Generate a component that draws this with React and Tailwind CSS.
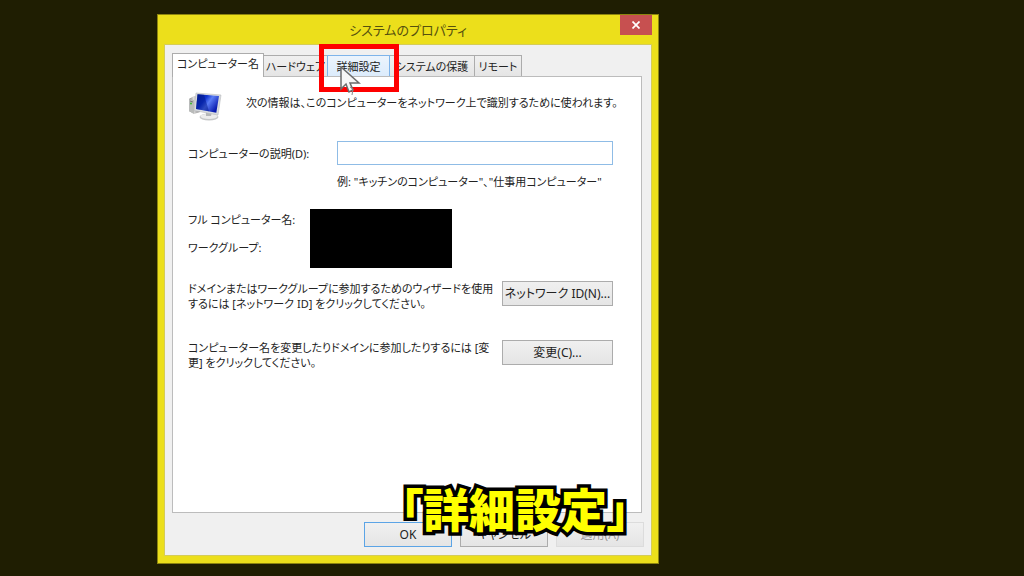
const tabs = [
  { label: 'コンピューター名', width: 'w-[92px]', state: 'selected' },
  { label: 'ハードウェア', width: 'w-[65px]', state: 'normal' },
  { label: '詳細設定', width: 'w-[63px]', state: 'hover' },
  { label: 'システムの保護', width: 'w-[86px]', state: 'normal' },
  { label: 'リモート', width: 'w-12', state: 'normal' },
];

const tabStyles = {
  selected: 'h-6 -mb-px border-b-0 border-[#acacac] bg-white pb-1 relative',
  normal: 'h-[21px] border-[#acacac] border-b-0 bg-linear-to-b from-[#f0f0f0] to-[#e5e5e5] -ml-px',
  hover: 'h-[21px] border-[#7eb4ea] border-b-0 bg-linear-to-b from-[#ecf4fc] to-[#dcecfc] -ml-px',
};

function Tab({ label, width, state, children }) {
  return (
    <div className={`flex ${state === 'hover' ? 'relative z-10' : ''}`}>
      <button
        type="button"
        role="tab"
        aria-selected={state === 'selected'}
        className={`flex items-center justify-center self-end border whitespace-nowrap ${width} ${tabStyles[state]}`}
      >
        {label}
      </button>
      {children}
    </div>
  );
}

function PushButton({ children, className = '', ...rest }) {
  return (
    <button
      type="button"
      className={`flex h-[25px] items-center justify-center border bg-linear-to-b from-[#f0f0f0] to-[#e5e5e5] whitespace-nowrap ${className}`}
      {...rest}
    >
      {children}
    </button>
  );
}

function ComputerIcon() {
  return (
    <svg viewBox="0 0 34 30" className="h-[30px] w-[34px] shrink-0" aria-hidden="true">
      <defs>
        <linearGradient id="screen" x1="0" y1="0" x2="1" y2="0.6">
          <stop offset="0" stopColor="#001b8c" />
          <stop offset="0.4" stopColor="#1034cf" />
          <stop offset="0.6" stopColor="#5b7df5" />
          <stop offset="1" stopColor="#0718ad" />
        </linearGradient>
        <linearGradient id="tower" x1="0" y1="0" x2="1" y2="0">
          <stop offset="0" stopColor="#777" />
          <stop offset="0.4" stopColor="#ddd" />
          <stop offset="1" stopColor="#888" />
        </linearGradient>
      </defs>
      <path d="M1 8 6 5 12 6V21L6 23 1 20Z" fill="url(#tower)" />
      <path d="M1 8 6 9V23L1 20Z" fill="#b9bbba" />
      <path d="M2 10 5 11" stroke="#777" />
      <circle cx="3" cy="12.500" r="1" fill="#39b82e" />
      <ellipse cx="21" cy="26" rx="9.500" ry="3.500" fill="#c5c7c8" />
      <ellipse cx="21" cy="25.300" rx="8.500" ry="2.600" fill="#ececec" />
      <path d="M18 20 24 21 23 25 18 25Z" fill="#b5b7b9" />
      <path d="M8 2 33 4 30 24 6 19.500Z" fill="#d9dcdf" stroke="#b8bbbd" strokeWidth=".6" />
      <path d="M9.500 3.300 31 5 28.300 21.700 8 18Z" fill="url(#screen)" />
      <path d="M9.500 3.300 16 3.800 21 20.300 8 18Z" fill="#00158a" opacity=".5" />
    </svg>
  );
}

function Pointer() {
  return (
    <svg viewBox="0 0 22 32" className="absolute top-[11px] left-3 h-8 w-[22px]" aria-hidden="true">
      <path d="M1 1V23L6 18 9 26 13 24 10 17H19Z" fill="#f6f6f6" stroke="#6b6b6b" strokeWidth="1.500" />
      <path d="M10 21 13 23 12 29" fill="none" stroke="#888" />
    </svg>
  );
}

export default function App() {
  return (
    <main className="min-h-screen bg-[#1f1e02] pt-[14px] pb-3 pl-[157px] font-['Noto_Sans','Noto_Sans_CJK_JP',sans-serif] text-[11px] leading-[15px] text-[#222] [font-feature-settings:'palt']">
      <section
        role="dialog"
        aria-labelledby="dialog-title"
        className="relative w-full max-w-[502px] border border-[#8d850f] bg-[#ecdf1b] px-[6px] pb-[7px]"
      >
        <header className="flex h-[29px] items-center justify-center">
          <h1 id="dialog-title" className="text-[13px] leading-5 text-[#55500e]">
            システムのプロパティ
          </h1>
          <button
            type="button"
            aria-label="閉じる"
            className="absolute top-0 right-[6px] flex h-5 w-8 items-center justify-center bg-[#c75050]"
          >
            <svg viewBox="0 0 8 8" className="h-2 w-2" aria-hidden="true">
              <path d="M.5 .5 7.500 7.500M7.500 .5 .5 7.500" stroke="#fff" strokeWidth="1.700" />
            </svg>
          </button>
        </header>

        <div className="border border-[#d5cc58] bg-[#f0f0f0] px-[7px] pt-2 pb-2">
          <div role="tablist" className="flex items-end">
            {tabs.map((tab) => (
              <Tab key={tab.label} {...tab}>
                {tab.state === 'hover' && (
                  <>
                    <span className="pointer-events-none absolute -top-[11px] -left-[9px] h-12 w-20 border-[5px] border-[#fe0000]" />
                    <Pointer />
                  </>
                )}
              </Tab>
            ))}
          </div>

          <div role="tabpanel" className="mr-[2px] border border-[#bcbcbc] bg-white pt-[14px] pr-7 pb-[142px] pl-[15px]">
            <div className="flex gap-6">
              <ComputerIcon />
              <p className="pt-1 whitespace-nowrap">
                次の情報は、このコンピューターをネットワーク上で識別するために使われます。
              </p>
            </div>

            <div className="mt-5 flex items-center">
              <label htmlFor="description" className="w-[149px] shrink-0">
                コンピューターの説明(D):
              </label>
              <input
                id="description"
                type="text"
                className="h-6 min-w-0 flex-1 border border-[#8fbce6] bg-white px-1 outline-none"
              />
            </div>
            <p className="mt-[9px] pl-[149px]">例: "キッチンのコンピューター"、"仕事用コンピューター"</p>

            <div className="mt-5 flex">
              <dl className="w-[122px] space-y-[13px] pt-[3px]">
                <dt>フル コンピューター名:</dt>
                <dt>ワークグループ:</dt>
              </dl>
              <div className="h-[59px] w-[142px] bg-black" />
            </div>

            <div className="mt-[13px] flex items-start justify-between">
              <p className="whitespace-nowrap">
                ドメインまたはワークグループに参加するためのウィザードを使用
                <br />
                するには [ネットワーク ID] をクリックしてください。
              </p>
              <PushButton className="w-[111px] border-[#acacac] text-xs">ネットワーク ID(N)...</PushButton>
            </div>

            <div className="mt-[29px] flex items-start justify-between">
              <p className="whitespace-nowrap">
                コンピューター名を変更したりドメインに参加したりするには [変
                <br />
                更] をクリックしてください。
              </p>
              <PushButton className="w-[111px] border-[#acacac] text-xs">変更(C)...</PushButton>
            </div>
          </div>

          <footer className="mt-[9px] flex justify-end gap-2">
            <PushButton className="w-[88px] border-[#5ba4e6] text-xs">OK</PushButton>
            <PushButton className="w-[88px] border-[#acacac] text-xs">キャンセル</PushButton>
            <PushButton className="w-[88px] border-[#dcdcdc] text-xs text-[#999]" disabled>
              適用(A)
            </PushButton>
          </footer>
        </div>

        <p className="pointer-events-none absolute right-7 bottom-6 font-['Noto_Sans_CJK_JP',sans-serif] text-[46px] leading-[64px] font-black whitespace-nowrap text-[#ffff00] [-webkit-text-stroke:7px_#000] [paint-order:stroke_fill]">
          「詳細設定」
        </p>
      </section>
    </main>
  );
}
